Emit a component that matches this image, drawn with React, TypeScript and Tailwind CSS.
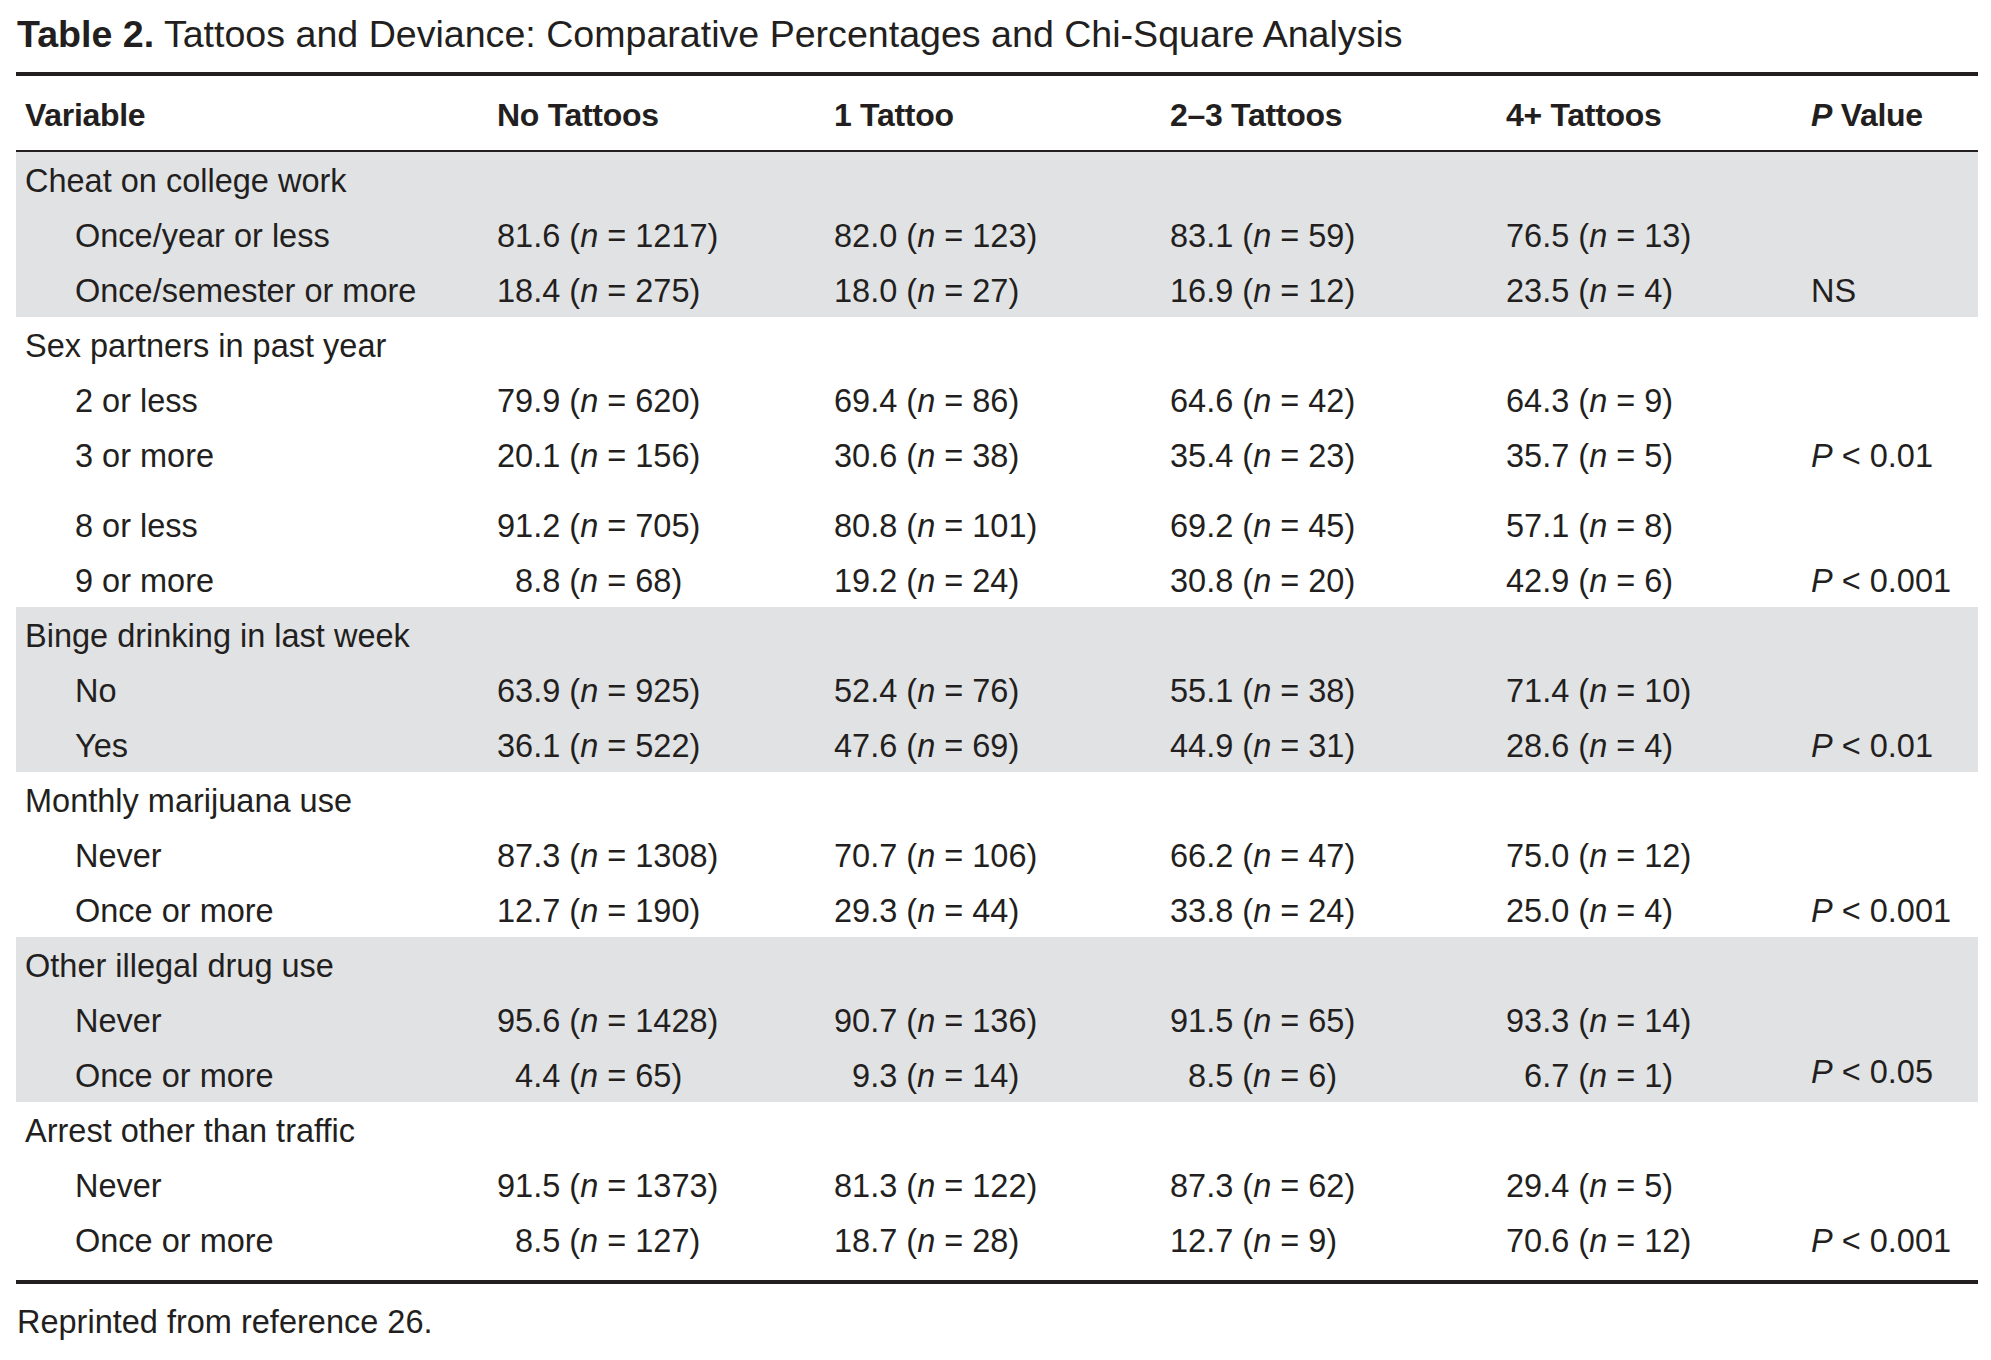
import React from "react";

type Cell = [string, string];
type Row = { label: string; cells: Cell[]; p?: string; gap?: boolean; raise?: boolean };
type Group = { title: string; shaded: boolean; rows: Row[]; last?: boolean };

const groups: Group[] = [
  {
    title: "Cheat on college work",
    shaded: true,
    rows: [
      { label: "Once/year or less", cells: [["81.6", "1217"], ["82.0", "123"], ["83.1", "59"], ["76.5", "13"]] },
      { label: "Once/semester or more", cells: [["18.4", "275"], ["18.0", "27"], ["16.9", "12"], ["23.5", "4"]], p: "NS" },
    ],
  },
  {
    title: "Sex partners in past year",
    shaded: false,
    rows: [
      { label: "2 or less", cells: [["79.9", "620"], ["69.4", "86"], ["64.6", "42"], ["64.3", "9"]] },
      { label: "3 or more", cells: [["20.1", "156"], ["30.6", "38"], ["35.4", "23"], ["35.7", "5"]], p: "0.01" },
      { label: "8 or less", cells: [["91.2", "705"], ["80.8", "101"], ["69.2", "45"], ["57.1", "8"]], gap: true },
      { label: "9 or more", cells: [["8.8", "68"], ["19.2", "24"], ["30.8", "20"], ["42.9", "6"]], p: "0.001" },
    ],
  },
  {
    title: "Binge drinking in last week",
    shaded: true,
    rows: [
      { label: "No", cells: [["63.9", "925"], ["52.4", "76"], ["55.1", "38"], ["71.4", "10"]] },
      { label: "Yes", cells: [["36.1", "522"], ["47.6", "69"], ["44.9", "31"], ["28.6", "4"]], p: "0.01" },
    ],
  },
  {
    title: "Monthly marijuana use",
    shaded: false,
    rows: [
      { label: "Never", cells: [["87.3", "1308"], ["70.7", "106"], ["66.2", "47"], ["75.0", "12"]] },
      { label: "Once or more", cells: [["12.7", "190"], ["29.3", "44"], ["33.8", "24"], ["25.0", "4"]], p: "0.001" },
    ],
  },
  {
    title: "Other illegal drug use",
    shaded: true,
    rows: [
      { label: "Never", cells: [["95.6", "1428"], ["90.7", "136"], ["91.5", "65"], ["93.3", "14"]] },
      { label: "Once or more", cells: [["4.4", "65"], ["9.3", "14"], ["8.5", "6"], ["6.7", "1"]], p: "0.05", raise: true },
    ],
  },
  {
    title: "Arrest other than traffic",
    shaded: false,
    last: true,
    rows: [
      { label: "Never", cells: [["91.5", "1373"], ["81.3", "122"], ["87.3", "62"], ["29.4", "5"]] },
      { label: "Once or more", cells: [["8.5", "127"], ["18.7", "28"], ["12.7", "9"], ["70.6", "12"]], p: "0.001" },
    ],
  },
];

const gridCols = "grid grid-cols-[481px_337px_336px_336px_305px_1fr]";

function Val({ c }: { c: Cell }) {
  const single = c[0].split(".")[0].length === 1;
  return (
    <div className={single ? "pl-[0.556em] whitespace-nowrap" : "whitespace-nowrap"}>
      {c[0]} (<span className="italic">n</span> = {c[1]})
    </div>
  );
}

function PCell({ p, raise }: { p?: string; raise?: boolean }) {
  if (!p) return <div />;
  if (p === "NS") return <div className="whitespace-nowrap">NS</div>;
  return (
    <div className={raise ? "whitespace-nowrap pb-[8px]" : "whitespace-nowrap"}>
      <span className="italic">P</span> &lt; {p}
    </div>
  );
}

function GroupBlock({ g }: { g: Group }) {
  return (
    <div className={(g.shaded ? "bg-[#e1e2e4] " : "") + (g.last ? "pb-[13px]" : "")}>
      <div className={gridCols + " h-[55px] items-center pt-[3px]"}>
        <div className="pl-[9px] whitespace-nowrap">{g.title}</div>
      </div>
      {g.rows.map((r, i) => (
        <div key={i} className={r.gap ? "pt-[15px]" : ""}>
          <div className={gridCols + " h-[55px] items-center pt-[3px]"}>
            <div className="pl-[59px] whitespace-nowrap">{r.label}</div>
            {r.cells.map((c, j) => (
              <Val key={j} c={c} />
            ))}
            <PCell p={r.p} raise={r.raise} />
          </div>
        </div>
      ))}
    </div>
  );
}

export default function App() {
  return (
    <div className="min-h-[1360px] w-[1991px] bg-white text-[#231f20] font-['Liberation_Sans',Arial,Helvetica,sans-serif]">
      <div className="ml-[16px] w-[1962px]">
        <div className="h-[72px] pt-[16px] pl-[1px] text-[37.6px] leading-[37px] whitespace-nowrap">
          <span className="font-bold">Table 2.</span> Tattoos and Deviance: Comparative Percentages and Chi-Square Analysis
        </div>
        <div className="h-[4px] bg-[#231f20]" />
        <div className={gridCols + " h-[74px] items-center pt-[4px] text-[32px] font-bold tracking-[-0.3px]"}>
          <div className="pl-[9px]">Variable</div>
          <div>No Tattoos</div>
          <div>1 Tattoo</div>
          <div>2–3 Tattoos</div>
          <div>4+ Tattoos</div>
          <div>
            <span className="italic">P</span> Value
          </div>
        </div>
        <div className="h-[2px] bg-[#231f20]" />
        <div className="text-[32.5px] leading-[32.5px]">
          {groups.map((g, i) => (
            <GroupBlock key={i} g={g} />
          ))}
        </div>
        <div className="h-[4px] bg-[#231f20]" />
        <div className="pt-[22px] pl-[1px] text-[32.5px] leading-[32.5px]">Reprinted from reference 26.</div>
      </div>
    </div>
  );
}
